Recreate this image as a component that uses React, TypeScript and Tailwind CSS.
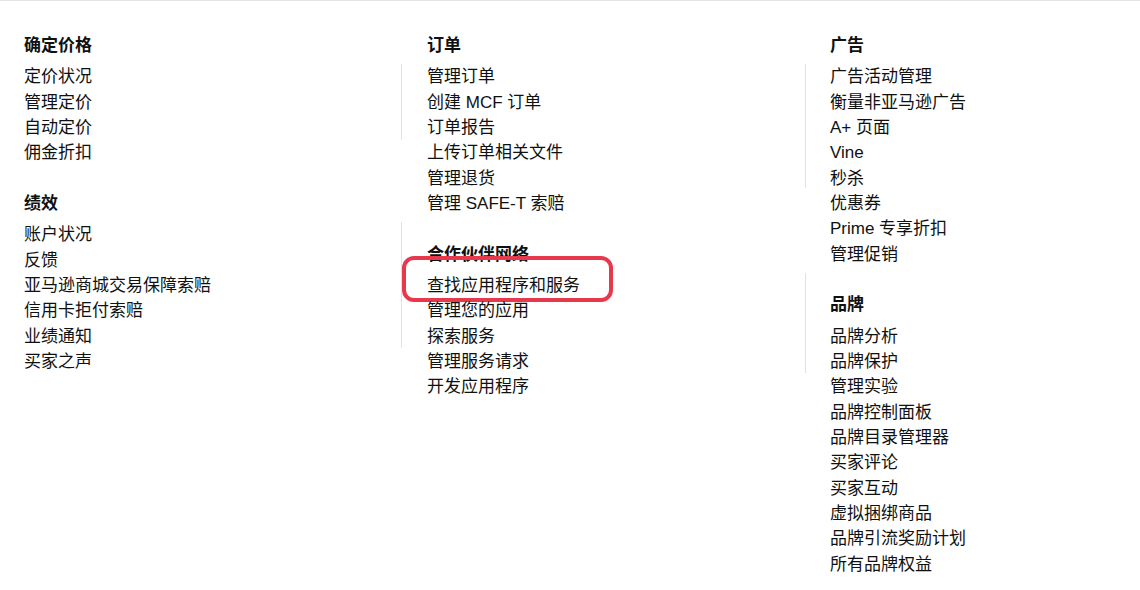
import React from "react";

type Section = { title: string; items: string[] };

const col1: Section[] = [
  { title: "确定价格", items: ["定价状况", "管理定价", "自动定价", "佣金折扣"] },
  {
    title: "绩效",
    items: ["账户状况", "反馈", "亚马逊商城交易保障索赔", "信用卡拒付索赔", "业绩通知", "买家之声"],
  },
];

const col2: Section[] = [
  {
    title: "订单",
    items: ["管理订单", "创建 MCF 订单", "订单报告", "上传订单相关文件", "管理退货", "管理 SAFE-T 索赔"],
  },
  {
    title: "合作伙伴网络",
    items: ["查找应用程序和服务", "管理您的应用", "探索服务", "管理服务请求", "开发应用程序"],
  },
];

const col3: Section[] = [
  {
    title: "广告",
    items: ["广告活动管理", "衡量非亚马逊广告", "A+ 页面", "Vine", "秒杀", "优惠券", "Prime 专享折扣", "管理促销"],
  },
  {
    title: "品牌",
    items: [
      "品牌分析",
      "品牌保护",
      "管理实验",
      "品牌控制面板",
      "品牌目录管理器",
      "买家评论",
      "买家互动",
      "虚拟捆绑商品",
      "品牌引流奖励计划",
      "所有品牌权益",
    ],
  },
];

const HIGHLIGHT = "查找应用程序和服务";

function Menu({ sections }: { sections: Section[] }) {
  return (
    <div className="flex flex-col gap-[25.5px]">
      {sections.map((s) => (
        <div key={s.title}>
          <h3 className="text-[17px] leading-[25.33px] font-bold text-[#0f1111] mb-[6px]">{s.title}</h3>
          <ul>
            {s.items.map((it) => (
              <li key={it} className="relative text-[17px] leading-[25.33px] text-[#0f1111]">
                {it}
                {it === HIGHLIGHT && (
                  <span className="absolute left-[-25px] top-[-17px] w-[211px] h-[46px] border-[4px] border-[#e8384c] rounded-[12px]" />
                )}
              </li>
            ))}
          </ul>
        </div>
      ))}
    </div>
  );
}

export default function App() {
  return (
    <div
      className="w-[1140px] h-[590px] bg-white border-t border-[#e3e3e3] overflow-hidden"
      style={{ fontFamily: '"Liberation Sans", "Noto Sans CJK SC", sans-serif' }}
    >
      <div className="grid grid-cols-[377px_404px_1fr] pl-[24px] pt-[32px]">
        <Menu sections={col1} />

        <div className="flex">
          <div className="flex flex-col w-px shrink-0">
            <div className="mt-[31px] h-[76px] bg-[#e2e2e2]" />
            <div className="mt-[82px] h-[126px] bg-[#e2e2e2]" />
          </div>
          <div className="ml-[25px]">
            <Menu sections={col2} />
          </div>
        </div>

        <div className="flex">
          <div className="flex flex-col w-px shrink-0">
            <div className="mt-[31px] h-[124px] bg-[#e2e2e2]" />
            <div className="mt-[85px] h-[100px] bg-[#e2e2e2]" />
          </div>
          <div className="ml-[24px]">
            <Menu sections={col3} />
          </div>
        </div>
      </div>
    </div>
  );
}
